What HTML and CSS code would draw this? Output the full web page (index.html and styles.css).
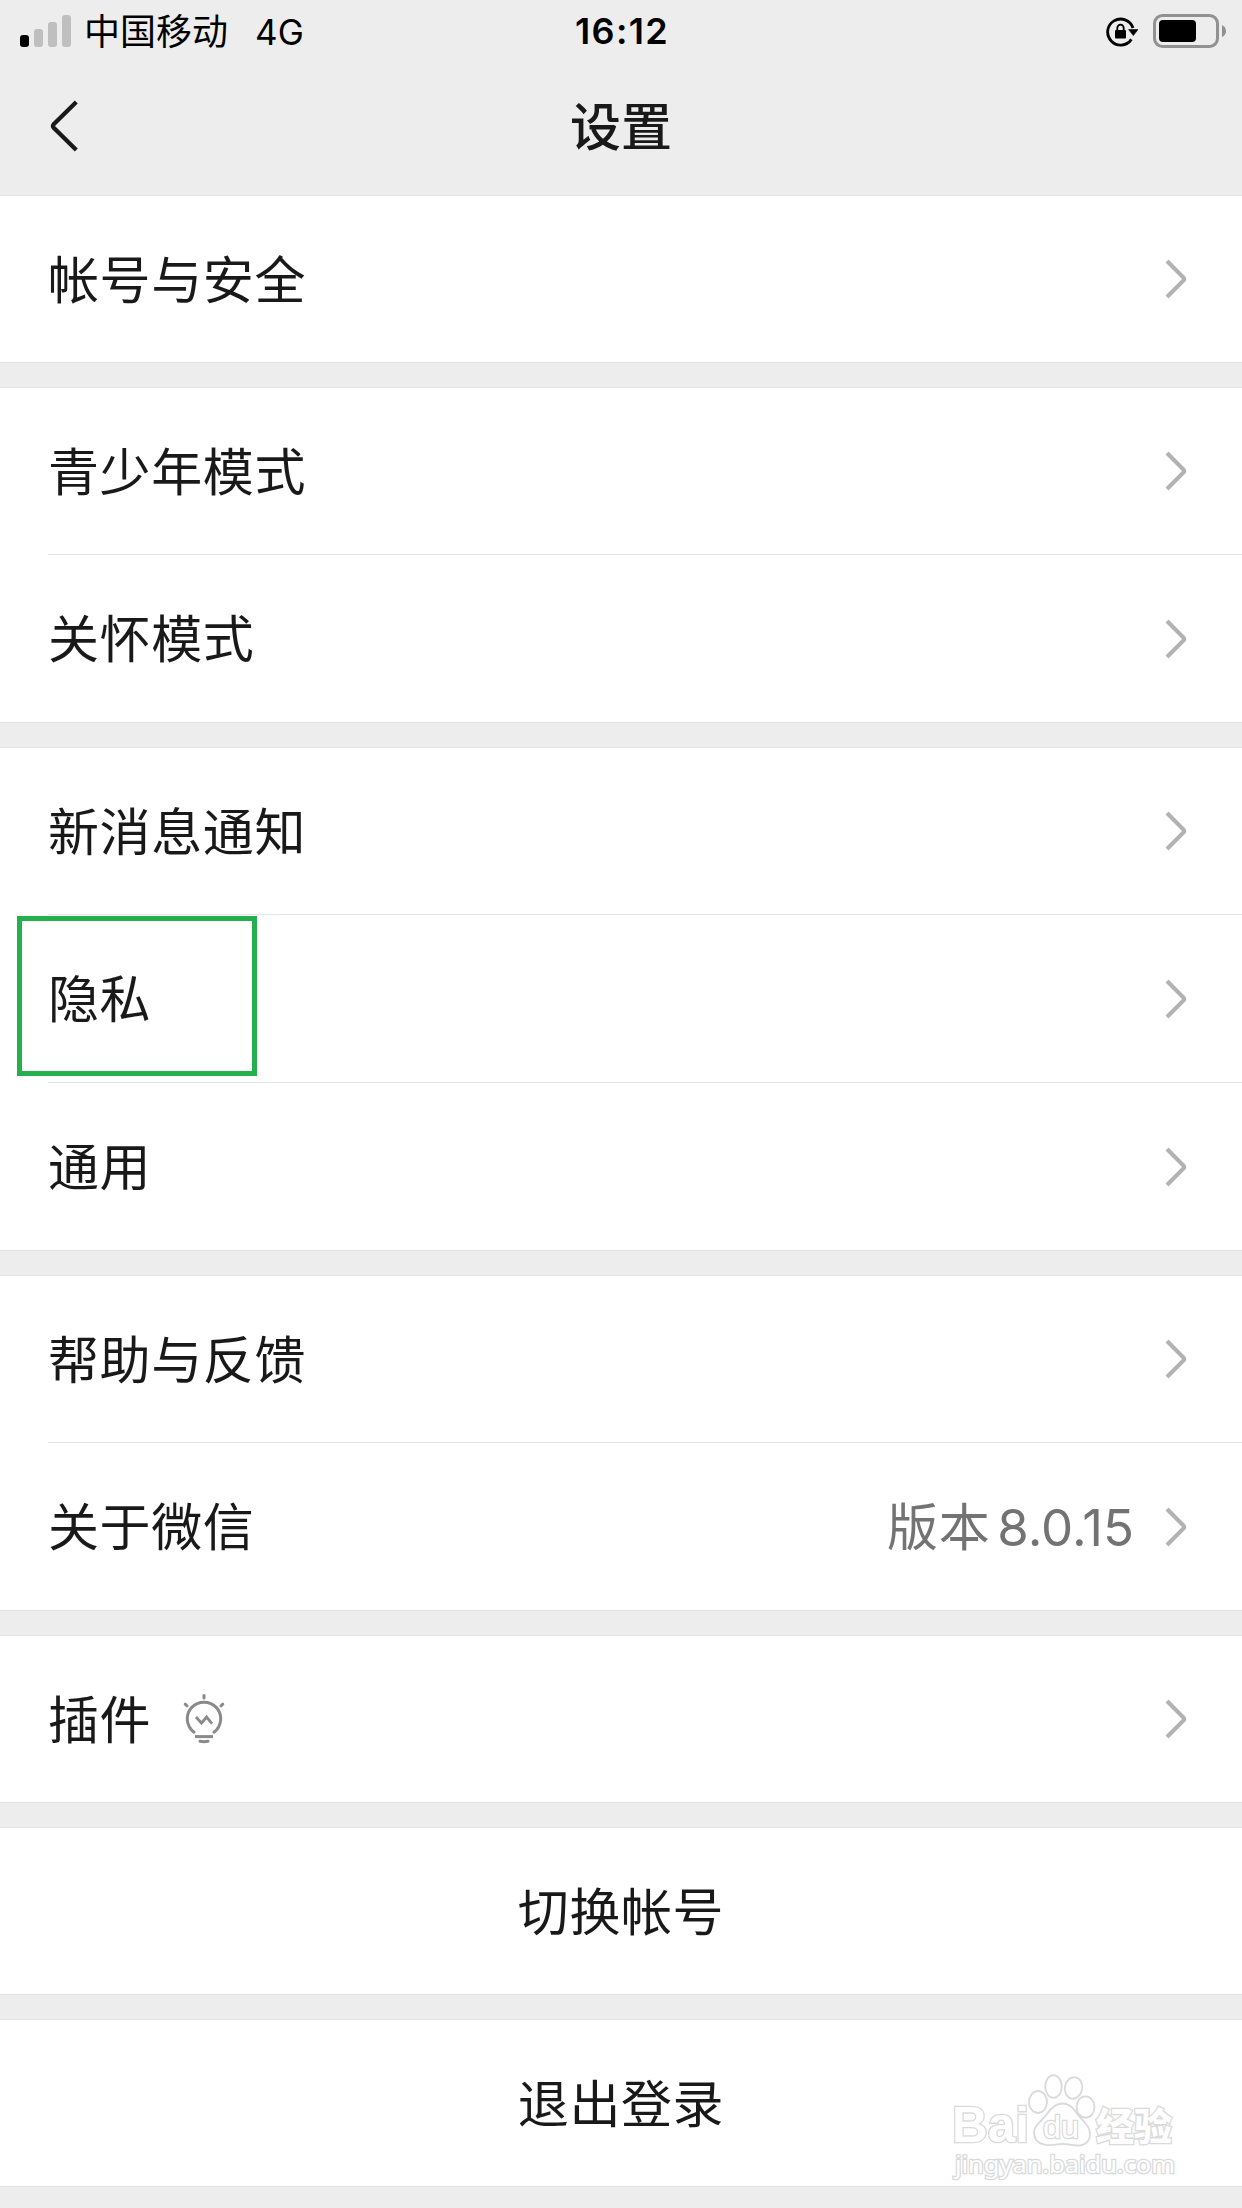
FILE: index.html
```html
<!DOCTYPE html>
<html lang="zh-CN">
<head>
  <meta charset="UTF-8">
  <title>设置</title>
  <link rel="stylesheet" href="styles.css">
</head>
<body>

<svg class="defs" width="0" height="0">
  <symbol id="arrow" viewBox="0 0 24 40">
    <path d="M2 2 L18.5 18.6 Q19.7 20 18.5 21.4 L2 38" fill="none" stroke="#b2b2b2" stroke-width="4.2"/>
  </symbol>
</svg>

<header>
  <div class="status-bar">
    <div class="status-left">
      <svg class="signal" width="52" height="32" viewBox="0 0 52 32">
        <rect x="0" y="20" width="9" height="12" rx="3" fill="#000"/>
        <rect x="14" y="14" width="9" height="18" rx="3" fill="#bfbfbf"/>
        <rect x="28" y="7" width="9" height="25" rx="3" fill="#bfbfbf"/>
        <rect x="42" y="0" width="9" height="32" rx="3" fill="#bfbfbf"/>
      </svg>
      <span class="carrier">中国移动</span>
      <span class="network">4G</span>
    </div>
    <div class="time">16:12</div>
    <div class="status-right">
      <svg class="lock" width="32" height="30" viewBox="0 0 32 30">
        <path d="M25.4 22.4 A13 13 0 1 1 27 11" fill="none" stroke="#000" stroke-width="2.8"/>
        <path d="M22.6 12.6 H32 L27.3 18.6 Z" fill="#000" stroke="#000" stroke-width="0.6"/>
        <rect x="9" y="13" width="11" height="8.5" rx="1" fill="#000"/>
        <path d="M11.3 14 V11 a3.2 3.4 0 0 1 6.4 0 V14" fill="none" stroke="#000" stroke-width="1.8"/>
      </svg>
      <svg class="battery" width="74" height="34" viewBox="0 0 74 34">
        <rect x="1.5" y="1.5" width="63" height="31" rx="8" fill="none" stroke="#919191" stroke-width="3"/>
        <rect x="6" y="6" width="37" height="22" rx="4" fill="#000"/>
        <path d="M69 11 Q73 13 73 17 Q73 21 69 23 Z" fill="#919191"/>
      </svg>
    </div>
  </div>
  <div class="nav-bar">
    <svg class="back" width="30" height="52" viewBox="0 0 30 52">
      <path d="M26.3 2 L3.5 24.4 Q2.3 26 3.5 27.6 L26.3 50" fill="none" stroke="#191919" stroke-width="4.2"/>
    </svg>
    <h1>设置</h1>
  </div>
</header>

<main>
  <div class="group">
    <div class="row"><span class="label">帐号与安全</span><svg class="arrow"><use href="#arrow"/></svg></div>
  </div>

  <div class="group">
    <div class="row"><span class="label">青少年模式</span><svg class="arrow"><use href="#arrow"/></svg></div>
    <div class="row"><span class="label">关怀模式</span><svg class="arrow"><use href="#arrow"/></svg></div>
  </div>

  <div class="group">
    <div class="row"><span class="label">新消息通知</span><svg class="arrow"><use href="#arrow"/></svg></div>
    <div class="row"><span class="label">隐私</span><svg class="arrow"><use href="#arrow"/></svg><div class="highlight"></div></div>
    <div class="row"><span class="label">通用</span><svg class="arrow"><use href="#arrow"/></svg></div>
  </div>

  <div class="group">
    <div class="row"><span class="label">帮助与反馈</span><svg class="arrow"><use href="#arrow"/></svg></div>
    <div class="row">
      <span class="label">关于微信</span>
      <span class="value">版本<span class="version">8.0.15</span></span>
      <svg class="arrow"><use href="#arrow"/></svg>
    </div>
  </div>

  <div class="group">
    <div class="row">
      <span class="label">插件</span>
      <svg class="bulb" width="42" height="52" viewBox="0 0 42 52">
        <g fill="none" stroke="#8a8a8a" stroke-width="3" stroke-linecap="round">
          <path d="M11 39.2 A16.7 16.7 0 1 1 31 39.2"/>
          <path d="M21 2.5 V5"/>
          <path d="M2.2 11.2 L4 12.8"/>
          <path d="M39.8 11.2 L38 12.8"/>
          <path d="M17 48.3 Q21 49.2 25 48.3"/>
        </g>
        <path d="M12 43.6 H30" stroke="#8a8a8a" stroke-width="3"/>
        <path d="M13 24 L18.5 30.2 L23.5 24 L29 30.6" fill="none" stroke="#8a8a8a" stroke-width="2.8"/>
      </svg>
      <svg class="arrow"><use href="#arrow"/></svg>
    </div>
  </div>

  <div class="group">
    <div class="row center"><span class="label">切换帐号</span></div>
  </div>

  <div class="group">
    <div class="row center"><span class="label">退出登录</span></div>
  </div>
</main>

<svg class="watermark" width="250" height="120" viewBox="-10 0 250 120">
  <g fill="#fff" stroke="#dadada" stroke-width="1.8">
    <ellipse cx="84" cy="36" rx="9" ry="11"/>
    <ellipse cx="99.5" cy="20.5" rx="8.3" ry="11.3"/>
    <ellipse cx="119.5" cy="22" rx="8.7" ry="10.8" transform="rotate(12 119.5 22)"/>
    <ellipse cx="131.5" cy="41" rx="9" ry="10.7"/>
    <path d="M108 37.5 C116 37.5 120 43 124 49 C129 55 136 60 136 68 C136 76 130 80 123 79.5 C116 79 112 77.5 107 78 C102 78.5 96 80 90 78.5 C83 77 80 72 80 66 C80 59 88 55 93 48 C97 42 101 37.5 108 37.5 Z"/>
  </g>
  <g class="outline">
    <text class="bai" x="-2" y="76" textLength="77" lengthAdjust="spacingAndGlyphs">Bai</text>
    <text class="du" x="89" y="72" textLength="36" lengthAdjust="spacingAndGlyphs">du</text>
    <text class="jingyan" x="142" y="74" textLength="76" lengthAdjust="spacingAndGlyphs">经验</text>
    <text class="url" x="1" y="107" textLength="220" lengthAdjust="spacingAndGlyphs">jingyan.baidu.com</text>
  </g>
</svg>

</body>
</html>
```
FILE: styles.css
```css
* {
  box-sizing: border-box;
}

body {
  margin: 0;
  position: relative;
  height: 2208px;
  overflow: hidden;
  background-color: #ededed;
  color: #191919;
  font-family: Inter, "Noto Sans CJK SC", sans-serif;
}

.defs {
  position: absolute;
}

header {
  height: 195px;
}

.status-bar {
  display: grid;
  grid-template-columns: 1fr auto 1fr;
  align-items: center;
  height: 60px;
  padding: 0 15px 0 20px;
  color: #000;
}

.status-left,
.status-right {
  display: flex;
  align-items: center;
}

.status-right {
  justify-content: flex-end;
}

.signal {
  margin-right: 12px;
}

.carrier {
  padding-top: 2px;
  font-size: 36px;
  line-height: 60px;
}

.network {
  margin-left: 27px;
  padding-top: 2px;
  font-size: 35px;
}

.time {
  padding-right: 3px;
  font-size: 36px;
  font-weight: 600;
  letter-spacing: 1.3px;
}

.lock {
  margin-top: 2px;
  margin-right: 15px;
}

.battery {
  margin-bottom: 1px;
}

.nav-bar {
  display: grid;
  grid-template-columns: 1fr auto 1fr;
  align-items: center;
  height: 135px;
  padding: 0 50px;
}

.back {
  margin-bottom: 4px;
}

h1 {
  margin: 0;
  padding-top: 1px;
  font-size: 51px;
  font-weight: 500;
  line-height: 70px;
}

main {
  display: flex;
  flex-direction: column;
  gap: 24px;
}

.group {
  background-color: #fff;
  border-top: 1px solid #e2e2e2;
  border-bottom: 1px solid #e2e2e2;
}

.row {
  position: relative;
  display: flex;
  align-items: center;
  height: 168px;
  margin-left: 48px;
  padding-right: 53px;
  border-bottom: 1px solid #e5e5e5;
}

.row:first-child {
  height: 167px;
}

.row:last-child {
  height: 167px;
  border-bottom: none;
}

.row:only-child {
  height: 166px;
}

.row.center {
  justify-content: center;
  margin-left: 0;
}

.row.center {
  padding-right: 0;
}

.label,
.value {
  padding-top: 3px;
  font-size: 51px;
  letter-spacing: 0.6px;
  line-height: 70px;
}

.value {
  margin-left: auto;
  margin-right: 31px;
  color: #737373;
}

.version {
  margin-left: 7px;
  letter-spacing: 0;
}

.arrow {
  width: 24px;
  height: 40px;
  margin-left: auto;
}

.value + .arrow {
  margin-left: 0;
}

.bulb {
  margin-left: 32px;
}

/* green frame around the privacy entry */
.highlight {
  position: absolute;
  left: -31px;
  top: 1px;
  width: 240px;
  height: 160px;
  border: 5px solid #24b14d;
}

.watermark {
  position: absolute;
  left: 944px;
  top: 2066px;
}

.outline text {
  fill: #fff;
  stroke: #dadada;
  stroke-width: 2.6px;
  paint-order: stroke;
}

.outline .bai {
  font: bold 50px "Liberation Sans", sans-serif;
}

.outline .du {
  font: 32px "Liberation Sans", sans-serif;
}

.outline .jingyan {
  font: 900 38px "Noto Sans CJK SC", sans-serif;
}

.outline .url {
  font: 24px "Noto Sans", sans-serif;
}
```
